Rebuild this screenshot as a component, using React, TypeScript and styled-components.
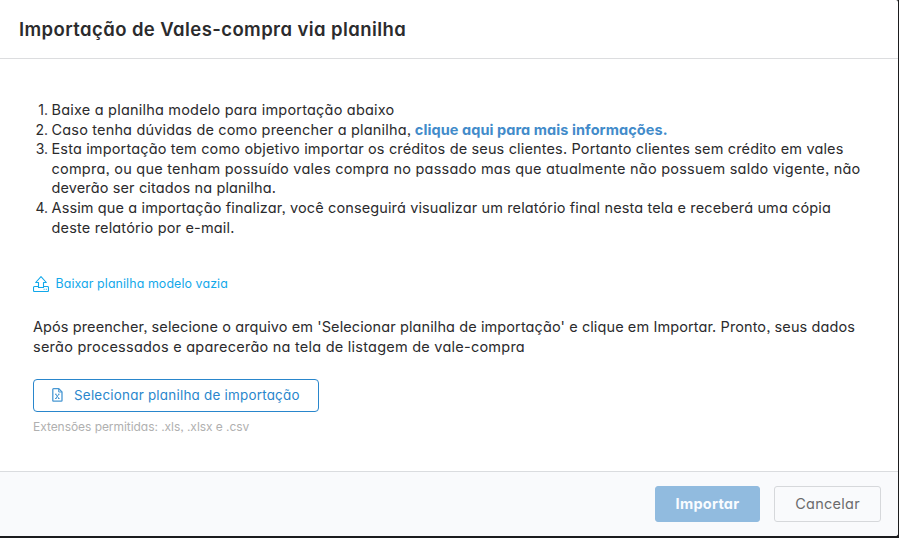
import React from 'react';
import styled, { createGlobalStyle } from 'styled-components';

const GlobalStyle = createGlobalStyle`
  *, *::before, *::after { box-sizing: border-box; }
  body {
    margin: 0;
    background: #1b1c1e;
    color: #2b2b2d;
    font-family: Inter, sans-serif;
    font-feature-settings: 'cv11' 1, 'ss03' 1;
    font-size: 14.5px;
  }
`;

const Backdrop = styled.div`
  height: 538px;
  padding: 0 1px 2px 0;
  overflow: hidden;
  background: #1b1c1e;
`;

const Modal = styled.section`
  display: flex;
  flex-direction: column;
  height: 536px;
  overflow: hidden;
  background: #fff;
  border-radius: 0 2px 3px 0;
`;

const Header = styled.header`
  flex: none;
  height: 59px;
  padding: 0 19px;
  border-bottom: 1px solid #dcdddf;
`;

const Title = styled.h1`
  margin: 0;
  font-size: 18.5px;
  font-weight: 600;
  line-height: 59px;
  letter-spacing: 0.41px;
  white-space: nowrap;
`;

const Body = styled.main`
  flex: 1;
  display: flex;
  flex-direction: column;
  align-items: flex-start;
  padding: 41.1px 33px 0;
`;

const Steps = styled.ol`
  margin: 0;
  padding: 0;
  list-style: none;
`;

const Step = styled.li`
  display: grid;
  grid-template-columns: 15px auto;
  column-gap: 3.5px;
`;

const StepNumber = styled.span`
  font-size: 14px;
  line-height: 19.6px;
  text-align: right;
`;

const Line = styled.span<{ $tracking: number }>`
  display: block;
  line-height: 19.6px;
  letter-spacing: ${({ $tracking }) => $tracking}px;
  white-space: nowrap;
`;

const HelpLink = styled.a`
  margin-left: -0.5px;
  color: #428bca;
  font-weight: 700;
  letter-spacing: 0.075px;
`;

const DownloadLink = styled.a`
  display: flex;
  align-items: center;
  gap: 6.5px;
  height: 20px;
  margin-top: 36.7px;
  color: #12a8ea;
  font-size: 12.4px;
  letter-spacing: 0.1px;
  white-space: nowrap;
`;

const Paragraph = styled.p`
  margin: 23px 0 0;
`;

const SelectButton = styled.button`
  display: flex;
  align-items: center;
  gap: 11px;
  width: 286px;
  height: 33px;
  margin-top: 22.8px;
  padding: 0 0 0 18px;
  border: 1px solid #2986cc;
  border-radius: 4px;
  background: #fff;
  color: #2986cc;
  font: inherit;
  font-feature-settings: inherit;
  font-size: 13.4px;
  letter-spacing: 0.24px;
  white-space: nowrap;
`;

const Hint = styled.small`
  margin-top: 5px;
  color: #b0b0b0;
  font-size: 12px;
  line-height: 20px;
  letter-spacing: -0.05px;
  white-space: nowrap;
`;

const Footer = styled.footer`
  flex: none;
  display: flex;
  justify-content: flex-end;
  gap: 14px;
  height: 65px;
  padding: 14px 17px 0;
  border-top: 1px solid #dadcdf;
  background: #f9fafc;
`;

const FooterButton = styled.button<{ $primary?: boolean }>`
  width: ${({ $primary }) => ($primary ? 105 : 107)}px;
  height: 36px;
  padding: 0 0 1px;
  border: 1px solid ${({ $primary }) => ($primary ? '#91bbdf' : '#d6d8db')};
  border-radius: 3px;
  background: ${({ $primary }) => ($primary ? '#91bbdf' : '#f9fafc')};
  color: ${({ $primary }) => ($primary ? '#f9fcff' : '#6b6b6d')};
  font: inherit;
  font-feature-settings: inherit;
  font-weight: ${({ $primary }) => ($primary ? 700 : 400)};
  letter-spacing: 0.26px;
`;

const UploadIcon = () => (
  <svg width="16" height="16" viewBox="0 0 16 16" fill="none" stroke="currentColor" strokeWidth="1.1" strokeLinejoin="round">
    <path d="M5.5 11.5V6.5H2.7L8 .7l5.3 5.8h-2.8v5h-5Z" />
    <path d="M5.5 10.5H1.5a1 1 0 0 0-1 1v3a1 1 0 0 0 1 1h13a1 1 0 0 0 1-1v-3a1 1 0 0 0-1-1h-4" />
    <path d="M10.6 13.3h1M12.8 13.3h1" />
  </svg>
);

const SheetIcon = () => (
  <svg width="11" height="14" viewBox="0 0 11 14" fill="none" stroke="currentColor" strokeLinejoin="round" opacity=".85">
    <path d="M1.5.7h5.3l3.2 3.2v8.6a.7.7 0 0 1-.7.7H1.5a.7.7 0 0 1-.7-.7V1.4a.7.7 0 0 1 .7-.7Z" strokeWidth="1.3" />
    <path d="M6.7.8V4H10" strokeWidth="1" />
    <path d="m3.7 6.2 3.2 4.3m0-4.3-3.2 4.3M3 6.2h1.6m1.4 0h1.5M3 10.5h1.6m1.4 0h1.5" strokeWidth="1" />
  </svg>
);

export default function App() {
  return (
    <>
      <GlobalStyle />
      <Backdrop>
        <Modal>
          <Header>
            <Title>Importação de Vales-compra via planilha</Title>
          </Header>
          <Body>
            <Steps>
              <Step>
                <StepNumber>1.</StepNumber>
                <Line $tracking={0.204}>Baixe a planilha modelo para importação abaixo</Line>
              </Step>
              <Step>
                <StepNumber>2.</StepNumber>
                <Line $tracking={0.17}>
                  Caso tenha dúvidas de como preencher a planilha,{' '}
                  <HelpLink>clique aqui para mais informações.</HelpLink>
                </Line>
              </Step>
              <Step>
                <StepNumber>3.</StepNumber>
                <div>
                  <Line $tracking={0.151}>
                    Esta importação tem como objetivo importar os créditos de seus clientes. Portanto clientes sem crédito em vales
                  </Line>
                  <Line $tracking={0.229}>
                    compra, ou que tenham possuído vales compra no passado mas que atualmente não possuem saldo vigente, não
                  </Line>
                  <Line $tracking={0.126}>deverão ser citados na planilha.</Line>
                </div>
              </Step>
              <Step>
                <StepNumber>4.</StepNumber>
                <div>
                  <Line $tracking={0.124}>
                    Assim que a importação finalizar, você conseguirá visualizar um relatório final nesta tela e receberá uma cópia
                  </Line>
                  <Line $tracking={0.168}>deste relatório por e-mail.</Line>
                </div>
              </Step>
            </Steps>
            <DownloadLink>
              <UploadIcon />
              Baixar planilha modelo vazia
            </DownloadLink>
            <Paragraph>
              <Line $tracking={0.099}>
                Após preencher, selecione o arquivo em 'Selecionar planilha de importação' e clique em Importar. Pronto, seus dados
              </Line>
              <Line $tracking={0.236}>serão processados e aparecerão na tela de listagem de vale-compra</Line>
            </Paragraph>
            <SelectButton type="button">
              <SheetIcon />
              Selecionar planilha de importação
            </SelectButton>
            <Hint>Extensões permitidas: .xls, .xlsx e .csv</Hint>
          </Body>
          <Footer>
            <FooterButton type="button" $primary>
              Importar
            </FooterButton>
            <FooterButton type="button">Cancelar</FooterButton>
          </Footer>
        </Modal>
      </Backdrop>
    </>
  );
}
